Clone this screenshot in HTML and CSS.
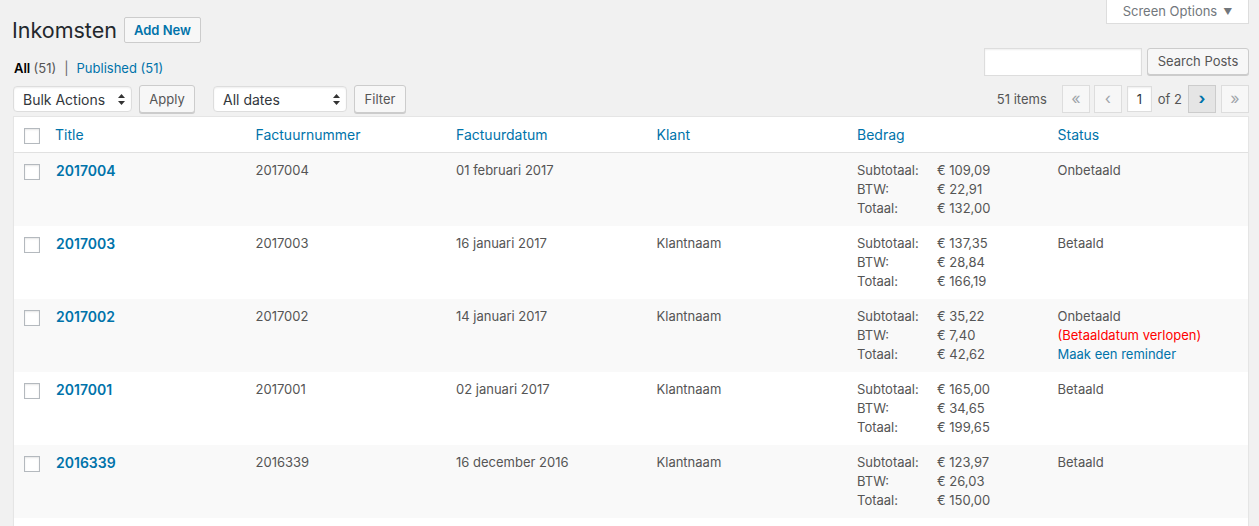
FILE: index.html
```html
<!DOCTYPE html>
<html lang="nl">
<head>
<meta charset="utf-8">
<title>Inkomsten</title>
<link rel="stylesheet" href="styles.css">
</head>
<body>
<div class="wrap">
  <div class="top">
    <div class="title-row">
      <h1 class="page-title">Inkomsten</h1>
      <a class="add-new" href="#">Add New</a>
    </div>
    <button class="screen-options" type="button">Screen Options <span class="tri">▼</span></button>
  </div>

  <div class="filters-row">
    <ul class="subsubsub">
      <li class="current">All <span class="count">(51)</span></li>
      <li class="sep">|</li>
      <li><a href="#">Published <span class="count">(51)</span></a></li>
    </ul>
    <div class="search-box">
      <input class="search-input" type="search">
      <button class="button" type="button">Search Posts</button>
    </div>
  </div>

  <div class="tablenav">
    <div class="nav-left">
      <div class="group">
        <span class="select select-bulk">Bulk Actions
          <svg class="arrows" width="7" height="11" viewBox="0 0 7 11"><path d="M3.5 0 L7 4 L0 4 Z M0 7 L7 7 L3.5 11 Z" fill="#333"/></svg>
        </span>
        <button class="button" type="button">Apply</button>
      </div>
      <div class="group">
        <span class="select select-dates">All dates
          <svg class="arrows" width="7" height="11" viewBox="0 0 7 11"><path d="M3.5 0 L7 4 L0 4 Z M0 7 L7 7 L3.5 11 Z" fill="#333"/></svg>
        </span>
        <button class="button" type="button">Filter</button>
      </div>
    </div>
    <div class="nav-right">
      <span class="items">51 items</span>
      <span class="pbtn disabled">«</span>
      <span class="pbtn disabled">‹</span>
      <span class="page-input">1</span>
      <span class="of">of 2</span>
      <span class="pbtn active">›</span>
      <span class="pbtn disabled">»</span>
    </div>
  </div>

  <table class="list">
    <thead>
      <tr>
        <th class="check"><span class="cb"></span></th>
        <th><a href="#">Title</a></th>
        <th><a href="#">Factuurnummer</a></th>
        <th><a href="#">Factuurdatum</a></th>
        <th><a href="#">Klant</a></th>
        <th><a href="#">Bedrag</a></th>
        <th><a href="#">Status</a></th>
      </tr>
    </thead>
    <tbody>
      <tr class="alt">
        <td class="check"><span class="cb"></span></td>
        <td class="title"><a href="#">2017004</a></td>
        <td>2017004</td>
        <td>01 februari 2017</td>
        <td></td>
        <td><div class="amounts"><span>Subtotaal:</span><span>€ 109,09</span><span>BTW:</span><span>€ 22,91</span><span>Totaal:</span><span>€ 132,00</span></div></td>
        <td class="status">Onbetaald</td>
      </tr>
      <tr>
        <td class="check"><span class="cb"></span></td>
        <td class="title"><a href="#">2017003</a></td>
        <td>2017003</td>
        <td>16 januari 2017</td>
        <td>Klantnaam</td>
        <td><div class="amounts"><span>Subtotaal:</span><span>€ 137,35</span><span>BTW:</span><span>€ 28,84</span><span>Totaal:</span><span>€ 166,19</span></div></td>
        <td class="status">Betaald</td>
      </tr>
      <tr class="alt">
        <td class="check"><span class="cb"></span></td>
        <td class="title"><a href="#">2017002</a></td>
        <td>2017002</td>
        <td>14 januari 2017</td>
        <td>Klantnaam</td>
        <td><div class="amounts"><span>Subtotaal:</span><span>€ 35,22</span><span>BTW:</span><span>€ 7,40</span><span>Totaal:</span><span>€ 42,62</span></div></td>
        <td class="status">Onbetaald<br><span class="overdue">(Betaaldatum verlopen)</span><br><a href="#">Maak een reminder</a></td>
      </tr>
      <tr>
        <td class="check"><span class="cb"></span></td>
        <td class="title"><a href="#">2017001</a></td>
        <td>2017001</td>
        <td>02 januari 2017</td>
        <td>Klantnaam</td>
        <td><div class="amounts"><span>Subtotaal:</span><span>€ 165,00</span><span>BTW:</span><span>€ 34,65</span><span>Totaal:</span><span>€ 199,65</span></div></td>
        <td class="status">Betaald</td>
      </tr>
      <tr class="alt">
        <td class="check"><span class="cb"></span></td>
        <td class="title"><a href="#">2016339</a></td>
        <td>2016339</td>
        <td>16 december 2016</td>
        <td>Klantnaam</td>
        <td><div class="amounts"><span>Subtotaal:</span><span>€ 123,97</span><span>BTW:</span><span>€ 26,03</span><span>Totaal:</span><span>€ 150,00</span></div></td>
        <td class="status">Betaald</td>
      </tr>
      <tr class="spacer">
        <td class="check"></td>
        <td></td><td></td><td></td><td></td><td></td><td></td>
      </tr>
    </tbody>
  </table>
</div>
</body>
</html>
```

FILE: styles.css
```css
* { box-sizing: border-box; }
html, body { margin: 0; padding: 0; }
body {
  background: #f1f1f1;
  font-family: Inter, "Open Sans", "Liberation Sans", sans-serif;
  font-size: 13px;
  color: #444;
  overflow: hidden;
}
a { color: #0073aa; text-decoration: none; }

.wrap { margin: 0 10px 0 13px; }

/* top */
.top { display: flex; justify-content: space-between; align-items: flex-start; }
.title-row { display: flex; align-items: center; gap: 8px; margin-top: 17px; height: 26px; }
.page-title {
  margin: 0 0 0 -1px;
  font-size: 21.5px;
  font-weight: 400;
  line-height: 26px;
  color: #23282d;
  padding-bottom: 1px;
}
.add-new {
  display: inline-flex;
  align-items: center;
  height: 26px;
  padding: 0 9px;
  margin-left: -1px;
  border: 1px solid #ccc;
  border-radius: 2px;
  background: #f7f7f7;
  font-size: 13px;
  font-weight: 600;
}
.screen-options {
  width: 143px;
  height: 24px;
  margin: 0;
  padding: 0 0 1px;
  border: 1px solid #ddd;
  border-top: 0;
  background: #fff;
  color: #72777c;
  font-family: inherit;
  font-size: 13px;
  display: flex;
  align-items: center;
  justify-content: center;
  gap: 6px;
}
.screen-options .tri { font-size: 9px; color: #72777c; }

/* filters */
.filters-row { display: flex; justify-content: space-between; align-items: flex-start; margin-top: 5px; height: 28px; }
.subsubsub {
  list-style: none;
  margin: 0;
  padding: 12px 0 0 1px;
  display: flex;
  gap: 6px;
  line-height: 16px;
  color: #666;
}
.subsubsub .current { color: #000; font-weight: 600; }
.subsubsub .current .count { color: #555; font-weight: 400; }
.subsubsub .sep { color: #666; padding: 0 2px; }
.search-box { display: flex; gap: 5px; }
.search-input {
  width: 158px;
  height: 28px;
  margin: 0;
  border: 1px solid #ddd;
  background: #fff;
  box-shadow: inset 0 1px 2px rgba(0,0,0,.07);
  outline: none;
}

.button {
  height: 27px;
  margin: 0;
  padding: 0 10px 1px;
  border: 1px solid #ccc;
  border-radius: 3px;
  background: #f7f7f7;
  box-shadow: 0 1px 0 #ccc;
  color: #555;
  font-family: inherit;
  font-size: 13px;
  line-height: 25px;
  white-space: nowrap;
}
.search-box .button { width: 102px; padding: 0; }

/* tablenav */
.tablenav { display: flex; justify-content: space-between; align-items: center; margin-top: 9px; height: 28px; }
.nav-left { display: flex; gap: 18px; align-items: center; }
.group { display: flex; gap: 7px; align-items: center; }
.group .button { height: 28px; line-height: 26px; padding: 0; }
.select {
  position: relative;
  display: flex;
  align-items: center;
  height: 26px;
  padding: 0 0 0 9px;
  border: 1px solid #ddd;
  border-radius: 4px;
  background: #fff;
  box-shadow: inset 0 1px 2px rgba(0,0,0,.07);
  font-size: 14px;
  color: #32373c;
}
.select-bulk { width: 119px; }
.select-dates { width: 134px; }
.select .arrows { position: absolute; right: 6px; top: 7px; }
.group:first-child .button { width: 56px; }
.group:last-child .button { width: 52px; }

.nav-right { display: flex; align-items: center; }
.items { color: #555; margin-right: 11px; }
.pbtn {
  width: 28px;
  height: 28px;
  display: flex;
  align-items: center;
  justify-content: center;
  padding-bottom: 3px;
  border: 1px solid #ddd;
  background: #f7f7f7;
  font-size: 16px;
  margin-left: 4px;
}
.pbtn:first-of-type { margin-left: 0; }
.pbtn.disabled { color: #a0a5aa; }
.pbtn.active { background: #e5e5e5; border-color: #ccc; color: #0073aa; font-weight: 700; margin-left: 6px; }
.pbtn:last-child { margin-left: 5px; }
.page-input {
  width: 25px;
  height: 26px;
  margin-left: 5px;
  border: 1px solid #ddd;
  background: #fff;
  box-shadow: inset 0 1px 2px rgba(0,0,0,.07);
  display: flex;
  align-items: center;
  justify-content: center;
  font-size: 13px;
  color: #32373c;
}
.of { margin-left: 6px; color: #555; }

/* table */
.list {
  width: 100%;
  margin-top: 3px;
  table-layout: fixed;
  border-collapse: separate;
  border-spacing: 0;
  border: 1px solid #e5e5e5;
  background: #fff;
  box-shadow: 0 1px 1px rgba(0,0,0,.04);
}
.list th, .list td {
  padding: 8px 10px;
  text-align: left;
  vertical-align: top;
  line-height: 19px;
}
.list th { font-size: 14px; font-weight: 400; border-bottom: 1px solid #e1e1e1; }
.list td { font-size: 13px; color: #555; }
.list .check { width: 31px; padding: 11px 0 0 10px; }
.list tr.alt td { background: #f9f9f9; }
.list tr.spacer td { height: 73px; }
.cb {
  display: block;
  width: 16px;
  height: 16px;
  border: 1px solid #b4b9be;
  background: #fff;
  box-shadow: inset 0 1px 2px rgba(0,0,0,.1);
}
.list td.title a { font-size: 14px; font-weight: 600; padding-left: 1px; }
.amounts { display: grid; grid-template-columns: 80px auto; }
.overdue { color: #f00; }
```
